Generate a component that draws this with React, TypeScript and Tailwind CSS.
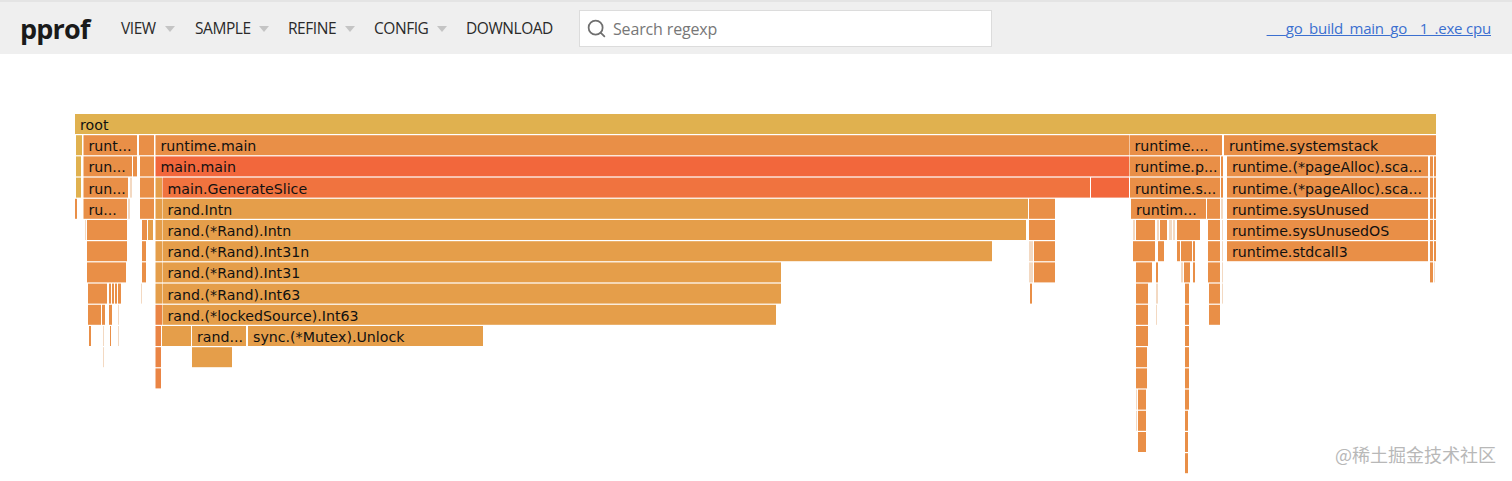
import React from "react";
import { Search } from "lucide-react";

type Bar = [number, number, string, string?];

const Y = "#e0b14f"; // root
const O = "#e98f47"; // runtime
const T = "#e59e4a"; // rand
const R = "#f2673c"; // main.main
const G = "#f0733f"; // GenerateSlice
const D = "#ea8545"; // darker slivers
const P = "#f3d9c2"; // hairline frames

// one list per stack depth, [x0, x1, colour, label]
const rows: Bar[][] = [
  [[75, 1436, Y, "root"]],
  [[76, 82, Y], [83.5, 137, O, "runt..."], [139, 154, O], [155.5, 1129, O, "runtime.main"], [1129.5, 1222, O, "runtime...."], [1224, 1436, O, "runtime.systemstack"]],
  [[76, 81, Y], [83.5, 132, O, "run..."], [133, 137, O], [140, 154, O], [155.5, 1129, R, "main.main"], [1129.5, 1220, O, "runtime.p..."], [1221, 1223, O], [1227, 1428, O, "runtime.(*pageAlloc).sca..."], [1430, 1433, O], [1434, 1436, O]],
  [[76, 81, Y], [83.5, 128, O, "run..."], [130, 132, P], [140, 154, O], [155.5, 162, T], [162.5, 1090, G, "main.GenerateSlice"], [1091, 1129, R], [1130, 1220, O, "runtime.s..."], [1221, 1223, O], [1227, 1428, O, "runtime.(*pageAlloc).sca..."], [1430, 1433, O], [1434, 1436, O]],
  [[75, 77, O], [83.5, 127, O, "ru..."], [128, 130, P], [140, 154, O], [155.5, 162, T], [162.5, 1028, T, "rand.Intn"], [1029, 1055, O], [1131, 1206, O, "runtim..."], [1207, 1220, O], [1221, 1223, P], [1227, 1428, O, "runtime.sysUnused"], [1430, 1433, O], [1434, 1436, O]],
  [[85, 86, P], [87, 127, O], [142, 147, O], [148, 153, T], [155.5, 162, T], [162.5, 1026, T, "rand.(*Rand).Intn"], [1029, 1055, O], [1133, 1135, P], [1136, 1155, O], [1157, 1159, P], [1160, 1167, O], [1169, 1172, P], [1173, 1175, P], [1177, 1200, O], [1208, 1220, O], [1222, 1223, P], [1227, 1428, O, "runtime.sysUnusedOS"], [1430, 1433, O], [1434, 1436, O]],
  [[87, 127, O], [142, 146, O], [155.5, 162, T], [162.5, 992, T, "rand.(*Rand).Int31n"], [1029, 1033, P], [1034, 1055, O], [1133, 1155, O], [1158, 1164, O], [1177, 1180, O], [1181, 1192, O], [1193, 1195, O], [1208, 1220, O], [1222, 1223, P], [1227, 1428, O, "runtime.stdcall3"], [1430, 1433, O], [1434, 1436, O]],
  [[87, 126, O], [142, 146, O], [155.5, 162, T], [162.5, 781, T, "rand.(*Rand).Int31"], [1029, 1033, P], [1034, 1055, O], [1136, 1152, O], [1156, 1158, O], [1181, 1183, P], [1184, 1190, O], [1193, 1195, O], [1208, 1220, O], [1222, 1223, P], [1430, 1433, O], [1434, 1435, P]],
  [[88, 107, O], [109, 111, O], [112, 114, O], [115, 117, O], [118, 121, O], [141, 142, P], [155.5, 162, T], [162.5, 781, T, "rand.(*Rand).Int63"], [1030, 1032, O], [1136, 1148, O], [1156, 1158, P], [1185, 1189, O], [1209, 1220, O], [1222, 1223, P]],
  [[88, 101, O], [102, 105, O], [109, 112, O], [118, 119, P], [155.5, 162, D], [162.5, 776, T, "rand.(*lockedSource).Int63"], [1136, 1148, O], [1156, 1157, P], [1185, 1189, O], [1209, 1220, O]],
  [[89, 91, O], [103, 104, P], [110, 111, O], [118, 119, P], [155.5, 161, D], [162, 191, T], [192, 246, T, "rand..."], [248, 483, T, "sync.(*Mutex).Unlock"], [1136, 1148, O], [1185, 1189, O]],
  [[103, 104, P], [155.5, 161, D], [192, 232, T], [1136, 1147, O], [1185, 1189, O]],
  [[155.5, 161, D], [1136, 1147, O], [1185, 1189, O]],
  [[1138, 1146, O], [1136, 1137, P], [1185, 1189, O]],
  [[1138, 1146, O], [1136, 1137, P], [1185, 1188, O]],
  [[1138, 1146, O], [1185, 1188, O]],
  [[1185, 1188, O]],
];

const menu = [
  { label: "VIEW", text: "w-[36px]", arrow: "ml-[8px]", gap: "mr-[20px]" },
  { label: "SAMPLE", text: "w-[56px]", arrow: "ml-[8px]", gap: "mr-[19px]" },
  { label: "REFINE", text: "w-[48px]", arrow: "ml-[9px]", gap: "mr-[19px]" },
  { label: "CONFIG", text: "w-[54px]", arrow: "ml-[9px]", gap: "mr-[19px]" },
  { label: "DOWNLOAD", text: "w-[86px]", arrow: "", gap: "mr-[27px]" },
];

function FlameGraph() {
  return (
    <svg width={1512} height={427} viewBox="0 54 1512 427" className="block">
      {rows.map((row, depth) =>
        row.map(([x0, x1, fill, label], i) => {
          const y = 114 + depth * 21.2;
          return (
            <g key={`${depth}-${i}`}>
              <rect x={x0} y={y} width={x1 - x0} height={20} fill={fill} />
              {label && (
                <text
                  x={x0 + 5}
                  y={y + 16}
                  fill="#111"
                  fontSize={14.2}
                  fontFamily="'DejaVu Sans', Verdana, sans-serif"
                >
                  {label}
                </text>
              )}
            </g>
          );
        })
      )}
    </svg>
  );
}

export default function App() {
  return (
    <div className="relative h-[481px] w-[1512px] overflow-hidden bg-white font-['Open_Sans',sans-serif]">
      {/* Header bar */}
      <header className="flex h-[54px] items-center border-t-2 border-[#e4e4e4] bg-[#efefef] pl-[20px] pr-[21px] pt-[1px]">
        <div className="mr-[31px] w-[70px] text-[27px] font-bold leading-none tracking-[-0.8px] text-[#1a1a1a]">pprof</div>
        {menu.map((m) => (
          <div key={m.label} className={`flex items-center ${m.gap}`}>
            <span className={`${m.text} whitespace-nowrap text-[15.5px] tracking-[-0.45px] text-[#2a2a2a]`}>{m.label}</span>
            {m.arrow && (
              <span className={`${m.arrow} h-0 w-0 border-x-[5px] border-t-[6px] border-x-transparent border-t-[#c4c4c4]`} />
            )}
          </div>
        ))}
        <div className="flex h-[37px] w-[413px] items-center gap-[6px] border border-[#dcdcdc] bg-white pl-[6px]">
          <Search className="h-[21px] w-[21px] text-[#6f6f6f]" strokeWidth={2} />
          <span className="text-[16px] tracking-[-0.15px] text-[#777]">Search regexp</span>
        </div>
        <a className="ml-auto whitespace-nowrap text-[15px] tracking-[-0.2px] text-[#3b6fd0] underline">
          ___go_build_main_go__1_.exe cpu
        </a>
      </header>

      <FlameGraph />

      {/* Site watermark */}
      <div className="absolute left-[1335px] top-[441px] whitespace-nowrap font-['Noto_Sans_CJK_SC',sans-serif] text-[18px] text-[#b8b8b8]">
        @稀土掘金技术社区
      </div>
    </div>
  );
}
